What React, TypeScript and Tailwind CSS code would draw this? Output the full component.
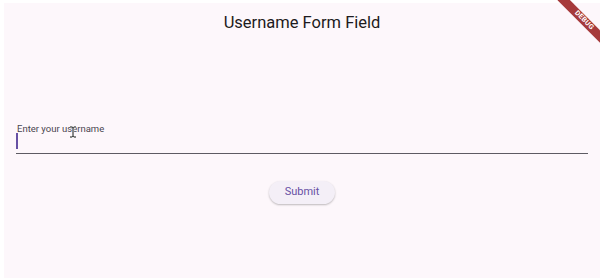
export default function App() {
  return (
    <main className="h-[278px] w-[600px] overflow-hidden bg-white pl-[4px] pt-[3px] font-['Roboto',sans-serif]">
      <div className="relative h-full w-full bg-[#fdf7fb]">
        <header className="flex h-[40px] items-center justify-center">
          <h1 className="text-[16.5px] leading-none text-[#1d1b20]">Username Form Field</h1>
        </header>

        <section className="flex flex-col px-[12px] pt-[78px]">
          <div className="relative border-b border-[#5e5b63]">
            <p className="relative top-[2px] pl-[1px] text-[9.5px] leading-[12px] text-[#49454f]">
              Enter your username
            </p>
            <div className="h-[20px]">
              <div className="h-[16px] w-[2px] bg-[#6750a4]" />
            </div>

            {/* mouse pointer */}
            <svg
              className="absolute left-[53px] top-[5px]"
              width="8"
              height="12"
              viewBox="0 0 8 12"
            >
              <path
                d="M1 1h2.2L4 1.8 4.8 1H7M4 1.8v8.4M1 11h2.2L4 10.2l.8.8H7"
                fill="none"
                stroke="#ffffff"
                strokeWidth="2.2"
              />
              <path
                d="M1 1h2.2L4 1.8 4.8 1H7M4 1.8v8.4M1 11h2.2L4 10.2l.8.8H7"
                fill="none"
                stroke="#111111"
                strokeWidth="1"
              />
            </svg>
          </div>

          <div className="flex justify-center pt-[27px]">
            <button className="h-[23px] w-[66px] rounded-full bg-[#f4eff7] text-[11px] font-normal text-[#6750a4] shadow-[0_1px_2px_rgba(0,0,0,0.25)]">
              Submit
            </button>
          </div>
        </section>

        {/* debug banner */}
        <div className="absolute left-[547px] top-[13px] flex h-[9px] w-[66px] rotate-45 items-center justify-center bg-[#a63a3b] text-[7px] font-bold leading-none tracking-[0.3px] text-white">
          DEBUG
        </div>
      </div>
    </main>
  );
}
